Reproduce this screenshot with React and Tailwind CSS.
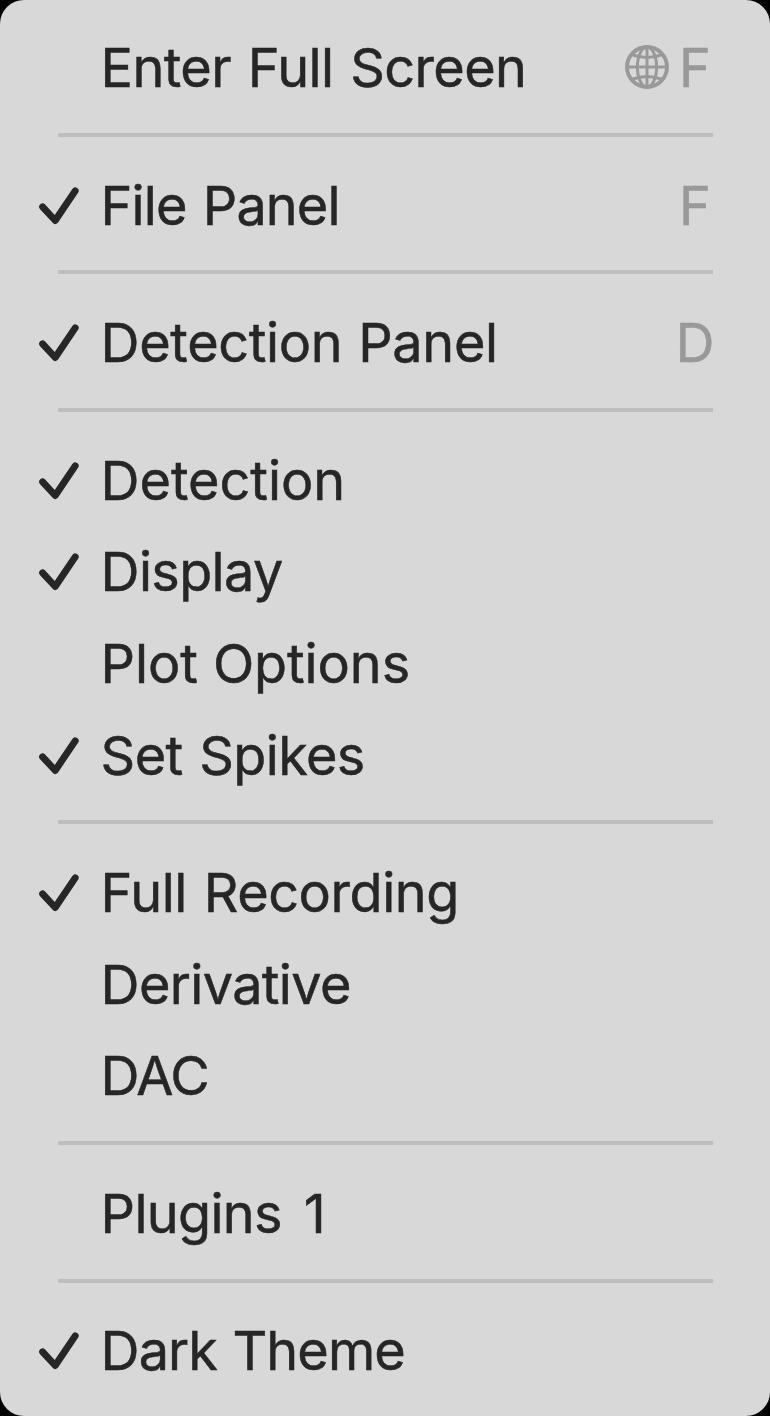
function Check() {
  return (
    <svg className="h-11 w-11" viewBox="0 0 44 44" fill="none" stroke="#262626" strokeWidth="6.9" strokeLinecap="round" strokeLinejoin="round">
      <path d="M6.6 22.9 L19.2 36.5 L39.2 6.9" />
    </svg>
  );
}

function Globe() {
  return (
    <svg className="mt-[2px] h-12 w-12" viewBox="-24 -24 48 48" fill="none" stroke="#999999" strokeWidth="3">
      <circle r="20" strokeWidth="3.9" />
      <ellipse rx="9.6" ry="20" />
      <path d="M-20 0H20M0 -20V20" />
      <path d="M-15.5 -12.5Q0 -6.5 15.5 -12.5M-15.5 12.5Q0 6.5 15.5 12.5" />
    </svg>
  );
}

function Item({ label, spacing = "", checked = false, globe = false, shortcut = "" }) {
  return (
    <div className="flex h-[91.667px] items-center pr-[51px] pl-9">
      <div className="w-[64.6px] shrink-0 pt-1">{checked && <Check />}</div>
      <div className={`grow pt-[4px] text-[54px] leading-[64px] whitespace-nowrap text-[#262626] [-webkit-text-stroke:0.5px_#262626] ${spacing}`}>{label}</div>
      {globe && <Globe />}
      {shortcut && (
        <div className="w-[48px] pt-[4px] text-center text-[54px] leading-[64px] text-[#999999] [-webkit-text-stroke:0.5px_#999999]">{shortcut}</div>
      )}
    </div>
  );
}

function Separator() {
  return (
    <div className="flex h-[45.833px] items-center pr-[57.5px] pl-[58px]">
      <div className="h-1 w-full bg-[#bebebe]" />
    </div>
  );
}

export default function App() {
  return (
    <div className="h-[1416px] w-[770px] bg-black">
      <div className="flex h-full flex-col rounded-[24px] bg-[#d8d8d8] pt-[20.4px] font-['Inter',sans-serif]">
        <Item label="Enter Full Screen" spacing="tracking-[-0.6px] [word-spacing:2.2px]" globe shortcut="F" />
        <Separator />
        <Item label="File Panel" spacing="tracking-[-0.9px] [word-spacing:2px]" checked shortcut="F" />
        <Separator />
        <Item label="Detection Panel" spacing="tracking-[-0.35px] [word-spacing:1px]" checked shortcut="D" />
        <Separator />
        <Item label="Detection" spacing="tracking-[-0.05px]" checked />
        <Item label="Display" spacing="tracking-[-0.65px]" checked />
        <Item label="Plot Options" spacing="tracking-[-0.1px]" />
        <Item label="Set Spikes" spacing="tracking-[-0.6px] [word-spacing:2px]" checked />
        <Separator />
        <Item label="Full Recording" spacing="tracking-[-0.45px] [word-spacing:2px]" checked />
        <Item label="Derivative" spacing="tracking-[-0.65px]" />
        <Item label="DAC" spacing="tracking-[-1.5px]" />
        <Separator />
        <Item label="Plugins 1" spacing="tracking-[-0.7px] [word-spacing:7.5px]" />
        <Separator />
        <Item label="Dark Theme" spacing="tracking-[-0.9px] [word-spacing:1px]" checked />
      </div>
    </div>
  );
}
